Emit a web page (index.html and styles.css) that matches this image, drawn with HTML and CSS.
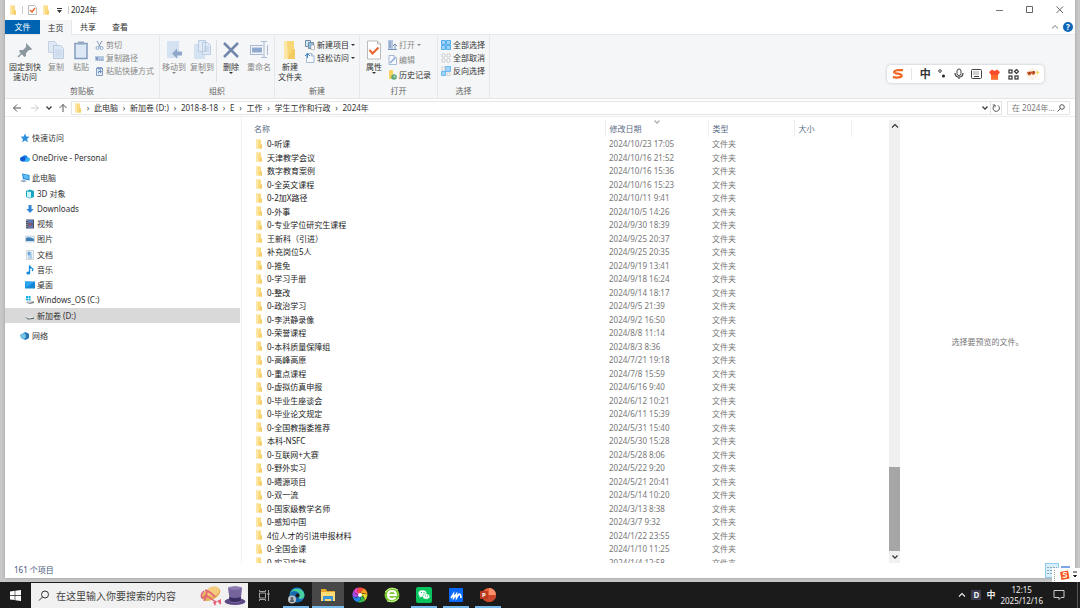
FILE: index.html
```html
<!DOCTYPE html>
<html lang="zh-CN">
<head>
  <meta charset="UTF-8">
  <title>2024年</title>
  <meta name="viewport" content="width=device-width, initial-scale=1.0">
  <link rel="stylesheet" href="styles.css">
</head>
<body>
  <!-- Shared icons -->
  <svg class="sprite" aria-hidden="true">
    <symbol id="folder" viewBox="0 0 7 10"><path d="M0 .5h5v5h1v4H0z" fill="#fbdc83"/><path d="M0 .5h2v9H0z" fill="#fce7a6"/><path d="M4 5.500h2v4H3z" fill="#f6cf6a"/></symbol>
    <symbol id="chev-down" viewBox="0 0 8 8"><path d="M1.500 2.500 4 5.200l2.500-2.700" fill="none" stroke="currentColor" stroke-width="1.200"/></symbol>
    <symbol id="chev-up" viewBox="0 0 8 8"><path d="M1 5.500 4 2.500l3 3" fill="none" stroke="currentColor" stroke-width="1.100"/></symbol>
    <symbol id="sogou" viewBox="0 0 12 10"><path d="M11 1.200C7 .8 2 1 2.200 3.200 2.500 5 9.800 4.200 9.700 6.600 9.500 8.800 4.500 8.800.8 8.200" fill="none" stroke="#f26522" stroke-width="2.200"/></symbol>
    <symbol id="page" viewBox="0 0 9 10"><path d="M1 .5h5l2.500 2.500v6.500H1z" fill="#f5f9fe" stroke="#a7bbd4"/><path d="M6 .5V3h2.500" fill="none" stroke="#a7bbd4"/></symbol>
  </svg>

  <div class="desktop">
    <main class="window">
      <header class="titlebar">
        <svg class="folder" aria-hidden="true"><use href="#folder"/></svg>
        <span class="divider"></span>
        <button class="quick" aria-label="属性"><svg width="9" height="10" viewBox="0 0 9 10"><path d="M.5.5h6l2 2v7h-8z" fill="#fff" stroke="#bbb"/><path d="m2 5 2 2 3-4" fill="none" stroke="#e8642c" stroke-width="1.400"/></svg></button>
        <button class="quick" aria-label="新建文件夹"><svg class="folder"><use href="#folder"/></svg></button>
        <button class="quick" aria-label="自定义快速访问工具栏"><svg width="5" height="5" viewBox="0 0 5 5"><path d="M0 0h5v1H0zM0 2h5L2.500 5z" fill="#333"/></svg></button>
        <span class="divider"></span>
        <h1>2024年</h1>
        <div class="window-buttons">
          <button aria-label="最小化"><svg width="8" height="8" viewBox="0 0 8 8"><path d="M0 4.500h7" stroke="#777"/></svg></button>
          <button aria-label="最大化"><svg width="8" height="8" viewBox="0 0 8 8"><path d="M.5.500h6v6h-6z" fill="none" stroke="#666"/></svg></button>
          <button aria-label="关闭"><svg width="8" height="8" viewBox="0 0 8 8"><path d="m.5.5 6.500 6.500m0-6.500L.5 7" stroke="#666"/></svg></button>
        </div>
      </header>

      <div class="tabs">
        <button class="tab file">文件</button>
        <button class="tab active">主页</button>
        <button class="tab">共享</button>
        <button class="tab">查看</button>
        <div class="tab-tools">
          <button aria-label="最小化功能区"><svg class="chev light"><use href="#chev-up"/></svg></button>
          <button class="help" aria-label="帮助">?</button>
        </div>
      </div>

      <section class="ribbon">
        <div class="group clipboard">
          <div class="tools">
            <button class="big pin"><svg width="20" height="20" viewBox="0 0 20 20"><path d="m11 3 6 6-1 1-2 0-3 3 0 3-1.500 1L4 11.500 5 10h3l3-3V5z" fill="#8b989f"/><path d="m7 13-4 4" stroke="#8b989f" stroke-width="1.500"/></svg>固定到快<br>速访问</button>
            <button class="big dim copy"><svg width="20" height="20" viewBox="0 0 20 20"><path d="M2.500 1.500h6l2 2v9h-8z" fill="#dfe9f4" stroke="#c3d1e2"/><path d="M7.500 5.500h7l3 3v10h-10z" fill="#dce8f5" stroke="#bacbdf"/><path d="M9 10h6M9 12h7M9 14h7M9 16h7" stroke="#c2d3e7"/></svg>复制</button>
            <button class="big dim paste"><svg width="20" height="20" viewBox="0 0 20 20"><path d="M4 3.500h12v15H4z" fill="#dce8f5" stroke="#829cc0" stroke-width="1.500"/><path d="M7 1.500h6v3H7z" fill="#96a9c4"/></svg>粘贴</button>
            <div class="small-col">
              <button class="small dim"><svg width="9" height="9" viewBox="0 0 9 9"><path d="m2 0 3.500 6M7 0 3.500 6" stroke="#8096b5"/><circle cx="2.500" cy="7" r="1.500" fill="none" stroke="#8aa6cc"/><circle cx="6.500" cy="7" r="1.500" fill="none" stroke="#8aa6cc"/></svg>剪切</button>
              <button class="small dim"><svg width="9" height="9" viewBox="0 0 9 9"><path d="M0 2h9v5H0z" fill="#b8cae2"/><path d="m1 3 1 3 1-3m1 3h1m1 0h2" fill="none" stroke="#6586b4" stroke-width=".8"/></svg>复制路径</button>
              <button class="small dim"><svg width="9" height="9" viewBox="0 0 9 9"><path d="M1.500 1h6v7.500h-6z" fill="#e6eefb" stroke="#829cc0"/><path d="M3 0h3v2H3zM3.500 6.500V4.500H6M5 3l1.500 1.500L5 6" fill="none" stroke="#6888ba"/></svg>粘贴快捷方式</button>
            </div>
          </div>
          <div class="group-label">剪贴板</div>
        </div>
        <div class="group organize">
          <div class="tools">
            <button class="big dim"><svg width="20" height="20" viewBox="0 0 20 20"><path d="M3 1h12v17H3z" fill="#d5e2f1"/><path d="m8 13.500 5-5v3h5v4h-5v3z" fill="#8fa7ca"/></svg>移动到<i class="caret"></i></button>
            <button class="big dim"><svg width="20" height="20" viewBox="0 0 20 20"><path d="M2 4h11v15H2z" fill="#d5e2f1"/><path d="M6.500.5h7v11h-7zM10.500 2.500h5l3 3v9h-8z" fill="#e2ebf5" stroke="#b8cce4"/><path d="M12 7h5M12 9h5M12 11h5" stroke="#b9cce4"/></svg>复制到<i class="caret"></i></button>
            <span class="tool-sep"></span>
            <button class="big"><svg width="20" height="20" viewBox="0 0 20 20"><path d="m3 3 14 14M17 3 3 17" stroke="#7187ae" stroke-width="2.500"/></svg>删除<i class="caret"></i></button>
            <button class="big dim"><svg width="20" height="20" viewBox="0 0 20 20"><path d="M1 5.500h13M1 14.500h13M1.500 5v10M18.500 5v10M12 1.500h2q1 0 1 1v14q0 1-1 1h-2m6-16h-2q-1 0-1 1m3 15h-2q-1 0-1-1" fill="none" stroke="#a8bad3"/><path d="M3 7.500h10v5H3z" fill="#8fa9d0"/></svg>重命名</button>
          </div>
          <div class="group-label">组织</div>
        </div>
        <div class="group create">
          <div class="tools">
            <button class="big new-folder"><svg width="20" height="20" viewBox="0 0 20 20"><path d="M4 1h10v8l1 1v9H4z" fill="#f8d778"/><path d="M4 1h3l1 18H4z" fill="#fce7a6"/><path d="m12 10 3-1v10H8z" fill="#f3cb62"/></svg>新建<br>文件夹</button>
            <div class="small-col">
              <button class="small"><svg width="10" height="10" viewBox="0 0 10 10"><path d="M.5.5h5v6h-5z" fill="#cde5f5" stroke="#718ca4"/><path d="M3.500 2.500h5v6h-5z" fill="#86bfe6" stroke="#7a8b9b"/><path d="M6 5h3.500v4.500H6z" fill="#fff" stroke="#999" stroke-width=".6"/></svg>新建项目<i class="caret"></i></button>
              <button class="small"><svg width="10" height="10"><use href="#page"/><path d="M0 3 2.500.5 5 3M2.500 1v4" stroke="#3a87c8" fill="none"/></svg>轻松访问<i class="caret"></i></button>
            </div>
          </div>
          <div class="group-label">新建</div>
        </div>
        <div class="group properties">
          <div class="tools">
            <button class="big"><svg width="20" height="20" viewBox="0 0 20 20"><path d="M3.500 1h10l3 3v15h-13z" fill="#fff" stroke="#bbb"/><path d="M13.500 1v3h3" fill="none" stroke="#bbb"/><path d="m5.500 10 3 3.500 6-6" fill="none" stroke="#e8642c" stroke-width="2"/></svg>属性<i class="caret"></i></button>
            <div class="small-col loose">
              <button class="small dim"><svg width="9" height="10" viewBox="0 0 9 10"><path d="M0 0h5v9H0z" fill="#b4c6e2"/><path d="M2 1v7M0 9.500h9M7 9V4M5 6l2-2 2 2" fill="none" stroke="#7891b9"/></svg>打开<i class="caret"></i></button>
              <button class="small dim"><svg width="9" height="10" viewBox="0 0 9 10"><use href="#page"/><path d="m2 8 5-5" stroke="#85a9d6" stroke-width="1.500"/></svg>编辑</button>
              <button class="small"><svg width="9" height="10" viewBox="0 0 9 10"><path d="M1 0h4v4l2 1v4H1z" fill="#fbd35d"/><circle cx="6" cy="7" r="2.800" fill="#5ba77a"/><path d="M6 5.500V7h1.500" fill="none" stroke="#fff" stroke-width=".7"/></svg>历史记录</button>
            </div>
          </div>
          <div class="group-label">打开</div>
        </div>
        <div class="group select">
          <div class="tools">
            <div class="small-col">
              <button class="small"><svg width="10" height="10" viewBox="0 0 10 10"><path d="M.5.5h4v4h-4zm5 0h4v4h-4zm-5 5h4v4h-4zm5 0h4v4h-4z" fill="#9fd3fb" stroke="#55aeea"/></svg>全部选择</button>
              <button class="small"><svg width="10" height="10" viewBox="0 0 10 10"><path d="M1 1h3v3H1zm5 0h3v3H6zM1 6h3v3H1zm5 0h3v3H6z" fill="#fff" stroke="#bbb" stroke-width=".7"/></svg>全部取消</button>
              <button class="small"><svg width="10" height="10" viewBox="0 0 10 10"><path d="M4.500.5h5v5h-5zm-4 5h4v4h-4z" fill="#9fd3fb" stroke="#6dbaf0"/><path d="M1 1h3v3H1zm5 6h3v2.500H6z" fill="#fff" stroke="#bbb" stroke-width=".7"/></svg>反向选择</button>
            </div>
          </div>
          <div class="group-label">选择</div>
        </div>
      </section>

      <!-- Address bar -->
      <div class="address-row">
        <div class="history">
          <button aria-label="后退"><svg width="10" height="10" viewBox="0 0 10 10"><path d="M9 5H1.500M5 1.500 1.500 5 5 8.500" fill="none" stroke="#555"/></svg></button>
          <button aria-label="前进"><svg width="10" height="10" viewBox="0 0 10 10"><path d="M1 5h7.500M5 1.500 8.500 5 5 8.500" fill="none" stroke="#ccc"/></svg></button>
          <button class="recent" aria-label="最近浏览的位置"><svg class="chev"><use href="#chev-down"/></svg></button>
          <button class="up" aria-label="向上"><svg width="10" height="10" viewBox="0 0 10 10"><path d="M5 9V1.500M1.500 5 5 1.500 8.500 5" fill="none" stroke="#555"/></svg></button>
        </div>
        <nav class="address" aria-label="路径">
          <svg class="folder"><use href="#folder"/></svg>
          <a href="#">此电脑</a>
          <a href="#">新加卷 (D:)</a>
          <a href="#">2018-8-18</a>
          <a href="#">E</a>
          <a href="#">工作</a>
          <a href="#">学生工作和行政</a>
          <a href="#">2024年</a>
          <button class="expand" aria-label="展开"><svg class="chev"><use href="#chev-down"/></svg></button>
          <button class="refresh" aria-label="刷新"><svg width="8" height="8" viewBox="0 0 8 8"><path d="M6 1.500A3.200 3.200 0 1 1 2.200 1.700M.7 1h2.300v2.300" fill="none" stroke="#555"/></svg></button>
        </nav>
        <div class="search">
          <input type="text" placeholder="在 2024年..." aria-label="搜索">
          <svg width="8" height="8" viewBox="0 0 8 8"><circle cx="5" cy="3" r="2.300" fill="none" stroke="#555"/><path d="M3.300 4.700.5 7.500" stroke="#555"/></svg>
        </div>
      </div>

      <div class="content">
        <nav class="tree" aria-label="导航窗格">
          <a class="root" href="#"><svg viewBox="0 0 10 10"><path d="m5 .5 1.300 3 3.200.3L7 6l.8 3.300L5 7.500 2.200 9.300 3 6 .5 3.800l3.200-.3z" fill="#2b8fe0"/></svg>快速访问</a>
          <a class="root" href="#"><svg viewBox="0 0 10 10"><path d="M2 8.500a2.300 2.300 0 0 1 .3-4.600 3 3 0 0 1 5.500.5A2.100 2.100 0 0 1 8 8.500z" fill="#1482e6"/><path d="M4 8.500q1-4 4-4a2 2 0 0 1 0 4z" fill="#37b4f4"/><circle cx="3" cy="6" r="2.400" fill="#1557d0"/></svg>OneDrive - Personal</a>
          <div class="branch">
            <a class="root" href="#"><svg viewBox="0 0 10 10"><path d="m2 .5 7.500 1.500v5.500L3 6z" fill="#1c86d4"/><path d="m3 1.500 5.500 1v4L4 5z" fill="#62bdf5"/><path d="m0 8 3-1.500 4 1.500-3 1.500z" fill="#9eb2c3"/></svg>此电脑</a>
            <a href="#"><svg viewBox="0 0 10 10"><path d="m1 2 4-1.500L9 2v6L5 9.500 1 8z" fill="#19a5bd"/><path d="m2 2.500 4 .5v6L2 8z" fill="#c9f4fa"/></svg>3D 对象</a>
            <a href="#"><svg viewBox="0 0 10 10"><path d="M3.500 1h3v4h2.200L5 9 1.300 5h2.200z" fill="#2f86d8"/></svg>Downloads</a>
            <a href="#"><svg viewBox="0 0 10 10"><path d="M1 .5h8v9H1z" fill="#4b4f5f"/><path d="M3 1h5v3.500H3z" fill="#5a79b8"/><path d="M3 5.500h5V9H3z" fill="#6475b4"/><path d="M4 4h2v3H4z" fill="#9e5357"/><path d="M2 1v8" stroke="#c7cad3" stroke-dasharray="1 1"/></svg>视频</a>
            <a href="#"><svg viewBox="0 0 10 10"><path d="M.5 2h9v6h-9z" fill="#dceaf5" stroke="#a9bfd0" stroke-width=".5"/><path d="M1 4q3-2 8 1v2H1z" fill="#3f7eb5"/></svg>图片</a>
            <a href="#"><svg viewBox="0 0 10 10"><path d="M1.500.5h7v9h-7z" fill="#eef3f8" stroke="#b4bdc6" stroke-width=".6"/><path d="M3 2h2v3H3zm3 0v6M3 6h3M3 8h4" fill="#6ba6d7" stroke="#6ba6d7" stroke-width=".7"/></svg>文档</a>
            <a href="#"><svg viewBox="0 0 10 10"><path d="M4.500 8V.5Q5 3 8 4q0 1-1 2" fill="none" stroke="#168ddd" stroke-width="1.300"/><ellipse cx="3.300" cy="8" rx="2" ry="1.500" fill="#168ddd"/></svg>音乐</a>
            <a href="#"><svg viewBox="0 0 10 10"><path d="M0 1.500h10v7H0z" fill="#1685d8"/><path d="m0 1.500 9 .5-8 6z" fill="#27a5ee"/></svg>桌面</a>
            <a href="#"><svg viewBox="0 0 10 10"><path d="M1 1h2v2H1zm2.500 0h2v2h-2zM1 3.500h2v2H1zm2.500 0h2v2h-2z" fill="#18aee1"/><path d="M1 7.500 5 9l4-1V6L5 7z" fill="#798187"/><path d="m1 6.500 4 1.500 4-2-3-.5z" fill="#d2d7da"/></svg>Windows_OS (C:)</a>
            <a class="current" href="#"><svg viewBox="0 0 10 10"><path d="m0 6 3 2.500L9 8V6.500L4 7z" fill="#666d72"/><path d="m0 5.500 4 2 5-1-4-1z" fill="#e8ebed"/></svg>新加卷 (D:)</a>
          </div>
          <a class="root" href="#"><svg viewBox="0 0 10 10"><path d="m0 4 5-3 4 2v4L5 9 1 7z" fill="#4da6d8"/><path d="m5 1 4 2v4L5 9z" fill="#2d75b1"/><circle cx="3.500" cy="5" r="2.500" fill="#75c4e8"/></svg>网络</a>
        </nav>

        <section class="files">
          <table>
            <thead>
              <tr>
                <th class="name">名称</th>
                <th class="date">修改日期<svg class="sort"><use href="#chev-down"/></svg></th>
                <th class="type">类型</th>
                <th class="size">大小</th>
                <th class="rest"></th>
              </tr>
            </thead>
            <tbody id="fileRows"></tbody>
          </table>
          <div class="scrollbar">
            <button aria-label="向上滚动"><svg class="chev"><use href="#chev-up"/></svg></button>
            <div class="track"><div class="thumb"></div></div>
            <button aria-label="向下滚动"><svg class="chev"><use href="#chev-down"/></svg></button>
          </div>
        </section>

        <aside class="preview">选择要预览的文件。</aside>
      </div>

      <footer class="status">161 个项目</footer>

      <!-- Input method bar -->
      <div class="ime">
        <svg width="12" height="10"><use href="#sogou"/></svg>
        <span class="ime-sep"></span>
        <b>中</b>
        <svg width="8" height="10" viewBox="0 0 8 10"><circle cx="2" cy="2" r="1.300" fill="none" stroke="#333" stroke-width=".9"/><circle cx="5.500" cy="7" r="1.500" fill="#222"/></svg>
        <svg width="10" height="12" viewBox="0 0 10 12"><rect x="3" y="1" width="4" height="6.500" rx="2" fill="none" stroke="#444"/><path d="M1 5q0 4 4 4t4-4M5 9v2" fill="none" stroke="#444" stroke-width="1.200"/></svg>
        <svg width="11" height="10" viewBox="0 0 11 10"><rect x=".5" y=".5" width="10" height="9" rx="1" fill="none" stroke="#444"/><path d="M2.500 3h6M2.500 5h6" stroke="#444" stroke-dasharray="1 1"/><path d="M3 7.500h5" stroke="#444"/></svg>
        <svg width="11" height="11" viewBox="0 0 11 11"><path d="m3 .5 2.500 1.500L8 .5 11 3 9.500 5.500 9 5v5.500H2V5l-.5.5L0 3z" fill="#fb4d2e"/><path d="M2 6h7v4.500H2z" fill="#ff6d28"/></svg>
        <svg width="11" height="11" viewBox="0 0 11 11"><g fill="none" stroke="#333" stroke-width="1.200"><rect x="1" y="1" width="3" height="3"/><rect x="1" y="7" width="3" height="3"/><rect x="7" y="7" width="3" height="3"/><path d="m8.500.5 2 2-2 2-2-2z"/></g></svg>
        <svg width="14" height="12" viewBox="0 0 14 12"><circle cx="6" cy="6" r="5.500" fill="#fff5eb" stroke="#f0e9e2" stroke-width=".5"/><path d="m1 4 8-1v3L7 7 5.500 5.500 4 7.500 2 7z" fill="#d1582b"/><path d="M3 5h1m3-1h1" stroke="#322"/><path d="m11.500 2 .7 1.800L14 4.500l-1.800.6-.7 1.900-.6-1.900L9 4.500l1.900-.7z" fill="#ffd44b"/></svg>
      </div>
      <div class="views">
        <button class="view active" aria-label="详细信息"><svg width="10" height="9" viewBox="0 0 10 9"><path d="M0 1.500h10M0 4.500h10M0 7.500h10" stroke="#8fa3b3" stroke-dasharray="2 1"/></svg></button>
        <button class="view" aria-label="大图标"><svg width="9" height="9" viewBox="0 0 9 9"><path d="M.5.5h8v8h-8z" fill="#fff" stroke="#bbb"/><path d="M0 0h9v3H0z" fill="#7ea6e8"/></svg></button>
      </div>
      <div class="ime-mini">
        <span class="grip"></span>
        <svg width="11" height="11" viewBox="0 0 11 11"><path d="M1 2 9 .5l1.500 8-8 1.500z" fill="#f4581f"/><path d="M8 3q-4-1-4 .8c0 1.500 4 .3 3.800 2.200Q7 8 3.500 7" fill="none" stroke="#fff" stroke-width="1.100"/></svg>
        <svg width="4" height="8" viewBox="0 0 4 8"><path d="M0 1h4M.5 4.500h3L2 6z" fill="#222" stroke="#222"/></svg>
      </div>
    </main>
  </div>

  <footer class="taskbar">
    <button class="start" aria-label="开始"><svg width="11" height="11" viewBox="0 0 11 11"><path d="m0 1.500 4.700-.7V5H0zM5.300.7 11 0v5H5.300zM0 5.700h4.700V10L0 9.400zm5.300 0H11V11l-5.700-.8z" fill="#fff"/></svg></button>
    <div class="task-search">
      <svg width="12" height="12" viewBox="0 0 12 12"><circle cx="7" cy="4.500" r="3.500" fill="none" stroke="#333"/><path d="M4.500 7 1 10.500" stroke="#333"/></svg>
      <input type="text" placeholder="在这里输入你要搜索的内容" aria-label="在这里输入你要搜索的内容">
      <svg width="46" height="22" viewBox="0 0 46 22"><ellipse cx="11" cy="9" rx="10" ry="6" transform="rotate(-28 11 9)" fill="#e8b25c"/><ellipse cx="13" cy="6" rx="6.500" ry="4.500" transform="rotate(-20 13 6)" fill="#f4cc80"/><path d="M5 5q6 2 10 7M4 6q-4 3-2 7 4 0 5-6M7 10l-3 6m3-5 9 6" fill="none" stroke="#e0607a" stroke-width="1.500"/><path d="m17 16 4-2v6zM17 16l-4 1 2 4z" fill="#e85e76"/><ellipse cx="35" cy="16.500" rx="10.500" ry="3.500" fill="#5d4a85"/><path d="M28 3q7-3 14 0l-1.500 14q-5 2-10.500 0z" fill="#75649c"/><path d="m29 12 .6 4q5 2 11 0l.5-4q-6 2-12 0z" fill="#392c61"/><ellipse cx="35" cy="3" rx="7" ry="1.800" fill="#8e7db2"/></svg>
    </div>
    <div class="apps">
      <button class="app" aria-label="任务视图"><svg width="11" height="11" viewBox="0 0 11 11"><path d="M.5 0v1.500h6V0m-6 11V9.500h6V11m-6-8h6v5h-6zM9.500 0v11M8 4h3" fill="none" stroke="#c8c8c8" stroke-width=".8"/></svg></button>
      <button class="app open" aria-label="Edge"><svg width="17" height="17" viewBox="0 0 17 17"><circle cx="9" cy="8" r="7.500" fill="#1584cf"/><path d="M2 7A7.500 7.500 0 0 1 16.500 8q0 4-5 4-2 0-1-2 2-3-2-4-4-.5-6.500 1z" fill="#48cf9d"/><path d="M2 6q4-4 9 0 1.500 2 0 4-1 3 4 2.500Q10 17 6 13 3 9 2 6z" fill="#1767ae"/><circle cx="9.500" cy="8.500" r="2" fill="#1b1b1b"/><circle cx="4" cy="12.500" r="4" fill="#bcbfc4"/><circle cx="4" cy="11.300" r="1.300" fill="#59616c"/><path d="M2 15q0-3 2-3t2 3z" fill="#59616c"/></svg></button>
      <button class="app open active" aria-label="文件资源管理器"><svg width="16" height="14" viewBox="0 0 16 14"><path d="M1 1h5l1 2h8v10H1z" fill="#e6a92d"/><path d="M1 4h14v9H1z" fill="#ffdb72"/><path d="M3 8h10v5h-2v-2H5v2H3z" fill="#3d94d8"/></svg></button>
      <button class="app" aria-label="360浏览器"><svg width="16" height="16" viewBox="-8 -8 16 16"><path d="M0 0Q-5-4-1-7.500 3-8 5-6 0-5 0 0z" fill="#f9483d"/><path d="M0 0Q1-6 5-6 8-3 7.500 0 4-4 0 0z" fill="#ff9c21"/><path d="M0 0Q5-3 7.500 0 7 4 4 6.500 6 1 0 0z" fill="#ddd829"/><path d="M0 0Q6 3 4 6.500 0 8-3 7 3 5 0 0z" fill="#32b64d"/><path d="M0 0Q2 6-3 7-7 5-7.500 1-3 5 0 0z" fill="#2184e7"/><path d="M0 0Q-4 4-7.500 1-8-3-5.500-5.500-6 0 0 0z" fill="#a449e5"/><path d="M0 0Q-6-1-5.500-5.500-4-7.500-1-7.500-5-4 0 0z" fill="#f442c0"/><circle r="2" fill="#fff"/></svg></button>
      <button class="app" aria-label="360安全浏览器"><svg width="16" height="16" viewBox="0 0 16 16"><circle cx="8" cy="8" r="7.500" fill="#7dc832"/><path d="M4 8h8q0-4-4-4T4 8t4 4q2 0 3.500-1.500" fill="none" stroke="#fff" stroke-width="2"/><path d="M1 5q6-6 13-2M3 14q7 2 12-3" fill="none" stroke="#c9f19a"/></svg></button>
      <button class="app open" aria-label="微信"><svg width="16" height="16" viewBox="0 0 16 16"><rect width="16" height="16" rx="2" fill="#08c45c"/><ellipse cx="6.500" cy="6.500" rx="4" ry="3.300" fill="#fff"/><path d="m4 8-.5 3L6 9z" fill="#fff"/><ellipse cx="10.200" cy="9.500" rx="3.500" ry="2.800" fill="#fff" stroke="#08c45c" stroke-width=".5"/><path d="M5 5.500h1m1.500 0h1M9 9h1m1 0h1" stroke="#08c45c"/></svg></button>
      <button class="app open" aria-label="会议"><svg width="16" height="16" viewBox="0 0 16 16"><rect x="1" y="1" width="14" height="14" rx="1" fill="#0868f7"/><path d="m3 11 2.500-4v4l3-4v4l2.500-4q2 0 2 4" fill="none" stroke="#fff" stroke-width="1.600"/></svg></button>
      <button class="app open" aria-label="PowerPoint"><svg width="16" height="16" viewBox="0 0 16 16"><circle cx="9" cy="8" r="7" fill="#e7633c"/><path d="M9 1a7 7 0 0 1 7 7H9z" fill="#fa8e69"/><path d="M2 8h14a7 7 0 0 1-14 0z" fill="#c9462a"/><rect y="4" width="8" height="8" rx="1" fill="#bd3b20"/><text x="2" y="10" class="ppt-letter">P</text></svg></button>
    </div>
    <div class="tray">
      <button aria-label="显示隐藏的图标"><svg class="chev"><use href="#chev-up"/></svg></button>
      <span class="tray-d">D</span>
      <span class="tray-lang">中</span>
      <div class="clock"><div>12:15</div><div>2025/12/16</div></div>
      <button class="notice" aria-label="通知"><svg width="12" height="12" viewBox="0 0 12 12"><path d="M1 1.500h10v7H8l-2 2v-2H1z" fill="none" stroke="#ccc"/></svg></button>
      <button class="show-desktop" aria-label="显示桌面"></button>
    </div>
  </footer>

  <script>
    const files = [
      ['0-听课', '2024/10/23 17:05'],
      ['天津教学会议', '2024/10/16 21:52'],
      ['数字教育案例', '2024/10/16 15:36'],
      ['0-全英文课程', '2024/10/16 15:23'],
      ['0-2加X路径', '2024/10/11 9:41'],
      ['0-外事', '2024/10/5 14:26'],
      ['0-专业学位研究生课程', '2024/9/30 18:39'],
      ['王新科（引进）', '2024/9/25 20:37'],
      ['补充岗位5人', '2024/9/25 20:35'],
      ['0-推免', '2024/9/19 13:41'],
      ['0-学习手册', '2024/9/18 16:24'],
      ['0-整改', '2024/9/14 18:17'],
      ['0-政治学习', '2024/9/5 21:39'],
      ['0-李洪静录像', '2024/9/2 16:50'],
      ['0-荣誉课程', '2024/8/8 11:14'],
      ['0-本科质量保障组', '2024/8/3 8:36'],
      ['0-高峰高原', '2024/7/21 19:18'],
      ['0-重点课程', '2024/7/8 15:59'],
      ['0-虚拟仿真申报', '2024/6/16 9:40'],
      ['0-毕业生座谈会', '2024/6/12 10:21'],
      ['0-毕业论文规定', '2024/6/11 15:39'],
      ['0-全国教指委推荐', '2024/5/31 15:40'],
      ['本科-NSFC', '2024/5/30 15:28'],
      ['0-互联网+大赛', '2024/5/28 8:06'],
      ['0-野外实习', '2024/5/22 9:20'],
      ['0-曦源项目', '2024/5/21 20:41'],
      ['0-双一流', '2024/5/14 10:20'],
      ['0-国家级教学名师', '2024/3/13 8:38'],
      ['0-感知中国', '2024/3/7 9:32'],
      ['4位人才的引进申报材料', '2024/1/22 23:55'],
      ['0-全国金课', '2024/1/10 11:25'],
      ['0-实习实践', '2024/1/4 12:58']
    ];

    const rows = document.getElementById('fileRows');
    files.forEach(([name, date]) => {
      const row = document.createElement('tr');
      row.innerHTML = `<td><span class="file-name"><svg class="folder"><use href="#folder"/></svg>${name}</span></td><td>${date}</td><td>文件夹</td><td></td><td></td>`;
      rows.appendChild(row);
    });
  </script>
</body>
</html>
```
FILE: styles.css
```css
* {
  box-sizing: border-box;
  margin: 0;
  padding: 0;
}
body {
  display: flex;
  flex-direction: column;
  height: 100vh;
  overflow: hidden;
  font-family: "Noto Sans", "Noto Sans CJK SC", sans-serif;
  font-size: 8px;
  line-height: 10px;
  color: #333;
}
button, input {
  font: inherit;
  color: inherit;
  background: none;
  border: none;
}
button {
  display: flex;
  align-items: center;
  justify-content: center;
}
a {
  color: inherit;
  text-decoration: none;
}
svg {
  display: block;
  flex: none;
}
.sprite {
  position: absolute;
  width: 0;
  height: 0;
}
.folder {
  width: 7px;
  height: 10px;
}
.chev {
  width: 8px;
  height: 8px;
}
.chev.light {
  color: #aaa;
}
.caret {
  border: 2px solid transparent;
  border-top-color: currentColor;
  border-bottom: none;
}

/* Window frame */
.desktop {
  flex: 1;
  min-height: 0;
  padding: 0 5px 4px;
  background: #c8c8c8;
}
.window {
  position: relative;
  display: flex;
  flex-direction: column;
  height: 100%;
  background: #fff;
  box-shadow: 0 0 3px #999;
}
.titlebar {
  display: flex;
  align-items: center;
  gap: 5px;
  height: 20px;
  padding-left: 5px;
}
.titlebar h1 {
  margin-left: -3px;
  font-size: 8px;
  font-weight: 400;
  color: #222;
}
.divider {
  width: 1px;
  height: 8px;
  background: #ccc;
}
.quick {
  min-width: 8px;
}
.window-buttons {
  display: flex;
  margin-left: auto;
}
.window-buttons button {
  width: 30px;
  height: 20px;
}

/* Tabs */
.tabs {
  display: flex;
  height: 15px;
  border-bottom: 1px solid #e6e8ea;
}
.tab {
  width: 32px;
  height: 14px;
}
.tab.file {
  width: 35px;
  background: #0063b1;
  color: #fff;
}
.tab.active {
  height: 15px;
  background: #f5f6f7;
  border-right: 1px solid #e6e8ea;
}
.tab-tools {
  display: flex;
  align-items: center;
  gap: 4px;
  margin-left: auto;
  padding-right: 2px;
}
.help {
  width: 10px;
  height: 10px;
  border-radius: 50%;
  background: #0b66b8;
  color: #fff;
  font-weight: 700;
}

/* Ribbon */
.ribbon {
  display: flex;
  height: 64px;
  background: #f5f6f7;
  border-bottom: 1px solid #e3e5e7;
}
.group {
  display: flex;
  flex-direction: column;
  justify-content: space-between;
  padding: 5px 0 2px;
  border-right: 1px solid #e6e8ea;
}
.group-label {
  text-align: center;
  color: #666;
}
.tools {
  display: flex;
  align-items: flex-start;
}
.big {
  flex-direction: column;
  justify-content: flex-start;
  width: 28px;
  white-space: nowrap;
}
.big svg {
  margin-bottom: 2px;
}
.dim {
  color: #888;
}
.tool-sep {
  width: 1px;
  height: 42px;
  background: #dfe1e4;
}
.small-col {
  display: flex;
  flex-direction: column;
  gap: 3px;
}
.small-col.loose {
  gap: 5px;
}
.small {
  justify-content: flex-start;
  gap: 2px;
  height: 10px;
  white-space: nowrap;
}
.clipboard {
  width: 155px;
}
.pin {
  width: 40px;
}
.copy {
  width: 22px;
}
.organize {
  width: 115px;
}
.create {
  width: 85px;
}
.new-folder {
  width: 30px;
}
.properties {
  width: 78px;
}
.select {
  width: 52px;
}
.select .tools {
  padding-left: 3px;
}

/* Address bar */
.address-row {
  display: flex;
  align-items: center;
  gap: 5px;
  height: 18px;
  padding-right: 5px;
  padding-top: 1px;
  border-bottom: 1px solid #eee;
}
.history {
  display: flex;
  gap: 8px;
  padding-left: 7px;
  align-items: center;
}
.recent, .up {
  margin-left: -3px;
}
.up {
  margin-right: -2px;
}
.address {
  display: flex;
  align-items: center;
  flex: 1;
  height: 14px;
  padding-left: 3px;
  border: 1px solid #e4e4e4;
}
.address a::before {
  content: "›";
  display: inline-block;
  width: 12px;
  text-align: center;
}
.expand {
  width: 11px;
  margin-left: auto;
}
.refresh {
  width: 11px;
  height: 12px;
  border-left: 1px solid #e4e4e4;
}
.search {
  display: flex;
  align-items: center;
  width: 63px;
  height: 14px;
  padding: 0 4px;
  border: 1px solid #e4e4e4;
}
.search input {
  flex: 1;
  min-width: 0;
}
.search input::placeholder {
  color: #777;
}

/* Navigation pane */
.content {
  display: flex;
  flex: 1;
  min-height: 0;
}
.tree {
  width: 237px;
  padding-top: 13px;
  padding-right: 1px;
  border-right: 1px solid #f0f0f0;
}
.tree a {
  display: flex;
  align-items: center;
  gap: 2px;
  height: 15px;
  padding-left: 20px;
}
.tree .root {
  padding-left: 15px;
}
.tree svg {
  width: 10px;
  height: 10px;
}
.tree > a + a,
.branch,
.branch + a {
  margin-top: 5px;
}
.branch a:nth-child(4n+1) {
  height: 16px;
}
.tree .current {
  background: #d9d9d9;
}

/* File list */
.files {
  display: flex;
  flex: 1;
  min-width: 0;
  padding-top: 3px;
  overflow: hidden;
}
table {
  flex: 1;
  height: max-content;
  table-layout: fixed;
  border-collapse: collapse;
  line-height: 13px;
}
th {
  position: relative;
  height: 17px;
  padding-left: 4px;
  border-right: 1px solid #eee;
  text-align: left;
  font-weight: 400;
  color: #5a6b85;
}
th.name {
  padding-left: 12px;
}
th.date {
  width: 103px;
}
th.type {
  width: 86px;
}
th.size {
  width: 57px;
}
th.rest {
  width: 38px;
  border: none;
}
.sort {
  position: absolute;
  top: -2px;
  left: 47px;
  width: 8px;
  height: 8px;
  color: #aaa;
}
td {
  height: 13px;
  padding-left: 4px;
  color: #777;
  white-space: nowrap;
}
td:first-child {
  padding-left: 14px;
  color: #222;
}
tr:nth-child(even) td {
  height: 14px;
}
.file-name {
  display: flex;
  align-items: center;
  gap: 4px;
}
.scrollbar {
  display: flex;
  flex-direction: column;
  width: 11px;
  background: #f0f0f0;
}
.scrollbar button {
  width: 11px;
  height: 12px;
}
.track {
  display: flex;
  flex-direction: column;
  justify-content: flex-end;
  flex: 1;
}
.thumb {
  height: 20%;
  background: #a6a6a6;
}
.preview {
  display: flex;
  align-items: center;
  justify-content: center;
  width: 175px;
  padding-top: 3px;
  color: #777;
}
.status {
  height: 15px;
  padding: 2px 9px;
  color: #45597a;
}

/* Floating input bars */
.ime {
  position: absolute;
  top: 65px;
  right: 31px;
  display: flex;
  align-items: center;
  justify-content: space-between;
  width: 157px;
  height: 18px;
  padding: 0 4px 0 5px;
  border-radius: 4px;
  background: #fff;
  box-shadow: 0 0 3px #bbb;
}
.ime b {
  font-size: 11px;
}
.ime-sep {
  width: 1px;
  height: 12px;
  background: #e5e5e5;
}
.views {
  position: absolute;
  right: 3px;
  bottom: 0;
  display: flex;
}
.view {
  width: 13px;
  height: 15px;
}
.view.active {
  width: 14px;
  border: 1px solid #8fcbea;
  background: #d7effb;
}
.ime-mini {
  position: absolute;
  right: -5px;
  bottom: -4px;
  display: flex;
  align-items: center;
  justify-content: space-between;
  width: 28px;
  height: 14px;
  padding: 0 3px 0 2px;
  background: #fff;
}
.grip {
  height: 11px;
  border-left: 1px dotted #999;
}

/* Taskbar */
.taskbar {
  display: flex;
  height: 26px;
  background: #1b1b1b;
  color: #eee;
}
.start {
  width: 31px;
}
.task-search {
  display: flex;
  align-items: center;
  gap: 6px;
  width: 217px;
  margin-top: 1px;
  padding: 0 2px 0 7px;
  background: #f1f1f1;
}
.task-search input {
  flex: 1;
  min-width: 0;
  font-size: 10px;
}
.task-search input::placeholder {
  color: #444;
}
.apps {
  display: flex;
}
.app {
  position: relative;
  width: 32px;
}
.app.active {
  background: #484848;
}
.app.open::after {
  content: "";
  position: absolute;
  right: 3px;
  bottom: 0;
  left: 3px;
  height: 2px;
  background: #76b9ed;
}
.app.active::after {
  right: 0;
  left: 0;
}
.ppt-letter {
  font-size: 6px;
  font-weight: 700;
  fill: #fff;
}
.tray {
  display: flex;
  align-items: center;
  gap: 5px;
  margin-left: auto;
  padding-right: 2px;
}
.tray-d {
  width: 10px;
  background: #3c3c50;
  text-align: center;
  font-weight: 700;
}
.tray-lang {
  font-size: 9px;
  font-weight: 700;
}
.clock {
  text-align: center;
  line-height: 11px;
}
.notice {
  margin: 0 7px 0 5px;
}
.show-desktop {
  width: 1px;
  height: 100%;
  background: #555;
}
```
